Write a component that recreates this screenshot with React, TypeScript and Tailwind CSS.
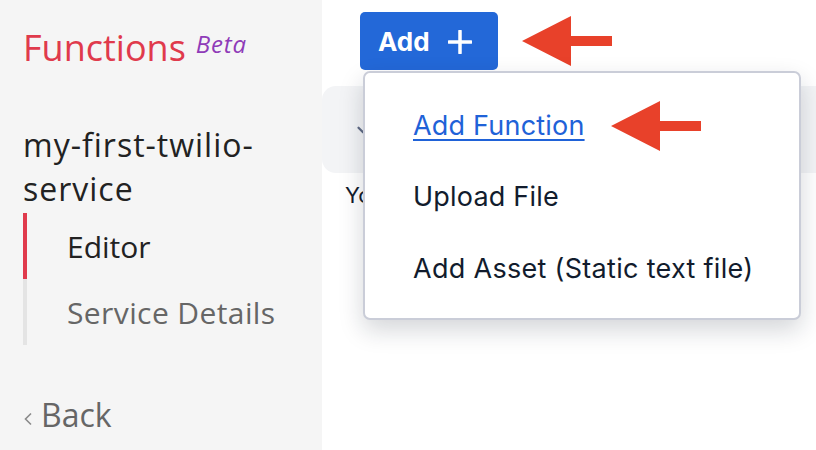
import { ChevronDown } from 'lucide-react';

const sideFont = { fontFamily: '"Open Sans", "Noto Sans", sans-serif' };

function Arrow({ className }: { className: string }) {
  return (
    <svg className={className} width="90" height="50" viewBox="0 0 90 50">
      <polygon points="0,25 49,0 49,20 90,20 90,30 49,30 49,50" fill="#e8412a" />
    </svg>
  );
}

function Sidebar() {
  return (
    <div className="w-[322px] shrink-0 h-full bg-[#f5f5f5] pl-[23px] flex flex-col" style={sideFont}>
      {/* Title */}
      <div className="flex items-start mt-[26px]">
        <span className="text-[36px] leading-[44px] text-[#e03a4c]">Functions</span>
        <span className="ml-[10px] mt-[4px] text-[24px] leading-[28px] italic text-[#8f3bb8] tracking-[0.8px]">Beta</span>
      </div>

      {/* Service name */}
      <div className="mt-[53px] text-[32px] leading-[44px] text-[#222] font-medium tracking-[1px]">
        my-first-twilio-
        <br />
        service
      </div>

      {/* Nav */}
      <div className="mt-[2px] flex flex-col">
        <div className="border-l-4 border-[#e03a4c] h-[66px] pl-[40px] flex items-center">
          <span className="text-[30px] text-[#222] font-medium">Editor</span>
        </div>
        <div className="border-l-4 border-[#e4e4e4] h-[66px] pl-[40px] flex items-center">
          <span className="text-[30px] text-[#666] tracking-[0.4px]">Service Details</span>
        </div>
      </div>

      {/* Back */}
      <div className="mt-[46px] flex items-center text-[#666]">
        <svg width="10" height="14" viewBox="0 0 10 14" className="mr-[8px] mt-[8px]">
          <path d="M8 1.5 2.5 7 8 12.5" fill="none" stroke="#8a8a8a" strokeWidth="1.6" />
        </svg>
        <span className="text-[32px]">Back</span>
      </div>
    </div>
  );
}

export default function App() {
  return (
    <div className="w-[816px] h-[450px] flex overflow-hidden bg-white relative" style={{ fontFamily: 'Inter, "Liberation Sans", sans-serif' }}>
      <Sidebar />

      <div className="flex-1 flex flex-col">
        <div className="pl-[38px] pt-[12px] flex items-center">
          <button type="button" className="w-[138px] h-[58px] rounded-[5px] bg-[#2368d8] text-white flex items-center pl-[18px] gap-[18px]">
            <span className="text-[26px] font-bold">Add</span>
            <svg width="24" height="24" viewBox="0 0 24 24" className="mt-[1px]">
              <path d="M12 1v22M1 12h22" stroke="white" strokeWidth="3.5" strokeLinecap="round" />
            </svg>
          </button>
          <Arrow className="ml-[24px]" />
        </div>

        <div className="mt-[16px] h-[87px] rounded-l-[14px] bg-[#f3f4f6] flex items-center pl-[32px]">
          <ChevronDown size={18} className="text-[#606b85]" strokeWidth={3} />
        </div>

        <div className="pl-[23px] mt-[6px] text-[22px] text-[#121c2d]">You</div>
      </div>

      {/* Dropdown menu */}
      <div className="absolute left-[363px] top-[71px] w-[438px] h-[249px] bg-white border-2 border-[#cacdd8] rounded-[7px] shadow-[0_10px_24px_rgba(18,28,45,0.18)] pl-[48px] pt-[33px] text-[#121c2d]">
        <div className="flex items-center h-[40px]">
          <span className="text-[27px] text-[#1f62d8] underline underline-offset-[4px] decoration-[2px] tracking-[0.2px]">Add Function</span>
          <Arrow className="ml-[26px]" />
        </div>
        <div className="mt-[31px] h-[40px] flex items-center text-[27px] tracking-[0.2px]">Upload File</div>
        <div className="mt-[32px] h-[40px] flex items-center text-[27px] tracking-[0.3px]">Add Asset (Static text file)</div>
      </div>
    </div>
  );
}
